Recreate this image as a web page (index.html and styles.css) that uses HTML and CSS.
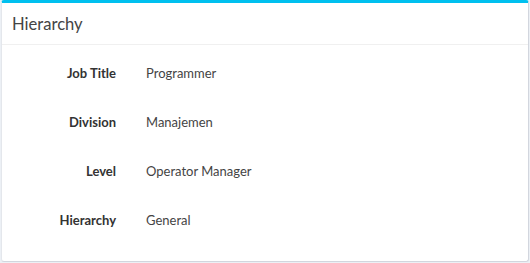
FILE: index.html
```html
<!DOCTYPE html>
<html>
<head>
<meta charset="utf-8">
<link rel="stylesheet" href="styles.css">
</head>
<body>
<div class="box">
  <div class="box-header"><h3 class="box-title">Hierarchy</h3></div>
  <div class="box-body">
    <div class="row"><div class="label">Job Title</div><div class="value">Programmer</div></div>
    <div class="row"><div class="label">Division</div><div class="value">Manajemen</div></div>
    <div class="row"><div class="label">Level</div><div class="value">Operator Manager</div></div>
    <div class="row"><div class="label">Hierarchy</div><div class="value">General</div></div>
  </div>
</div>
</body>
</html>
```
FILE: styles.css
```css
html, body { margin: 0; padding: 0; }
body {
  background: #ecf0f5;
  font-family: Lato, "Open Sans", sans-serif;
  font-size: 13px;
  color: #333;
  width: 530px;
  height: 263px;
  overflow: hidden;
}
.box {
  margin: 0 1px 0 1px;
  height: 262px;
  box-sizing: border-box;
  background: #fff;
  border-top: 3px solid #00c0ef;
  border-radius: 3px;
  border-left: 1px solid #e4e7ec;
  border-right: 1px solid #d2d6de;
  border-bottom: 1px solid #d2d6de;
}
.box-header {
  padding: 11px 10px 9px;
  height: 42px;
  box-sizing: border-box;
  border-bottom: 1px solid #f0f0f0;
  display: flex;
  align-items: center;
}
.box-title {
  margin: 0;
  font-size: 16.6px;
  font-weight: 400;
  line-height: 1;
  color: #444;
}
.box-body { padding: 11px 0 0 0; }
.row {
  display: grid;
  grid-template-columns: 114px 1fr;
  column-gap: 30px;
  padding: 7px 0;
  line-height: 20px;
  margin-bottom: 15px;
}
.label { text-align: right; font-weight: 700; color: #333; }
.value { color: #444; }
```
